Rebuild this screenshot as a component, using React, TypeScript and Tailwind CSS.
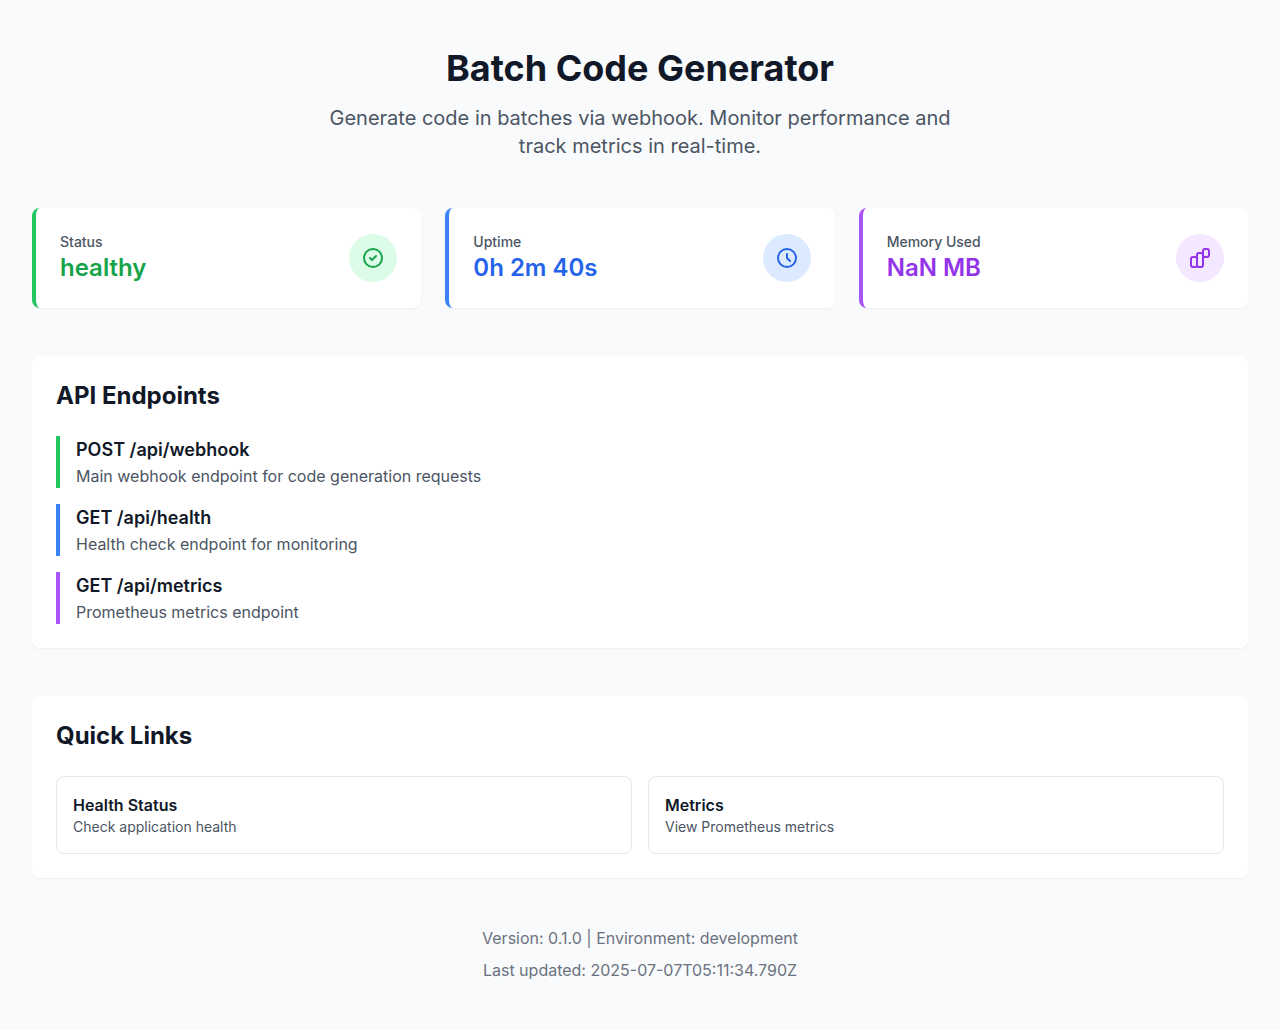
const stats = [
  {
    label: 'Status', value: 'healthy', border: 'border-[#22c55e]', text: 'text-[#16a34a]', bg: 'bg-[#dcfce7]',
    path: 'M9 12l2 2 4-4m6 2a9 9 0 11-18 0 9 9 0 0118 0z',
  },
  {
    label: 'Uptime', value: '0h 2m 40s', border: 'border-[#3b82f6]', text: 'text-[#2563eb]', bg: 'bg-[#dbeafe]',
    path: 'M12 8v4l3 3m6-3a9 9 0 11-18 0 9 9 0 0118 0z',
  },
  {
    label: 'Memory Used', value: 'NaN MB', border: 'border-[#a855f7]', text: 'text-[#9333ea]', bg: 'bg-[#f3e8ff]',
    path: 'M9 19v-6a2 2 0 00-2-2H5a2 2 0 00-2 2v6a2 2 0 002 2h2a2 2 0 002-2zm0 0V9a2 2 0 012-2h2a2 2 0 012 2v10m-6 0a2 2 0 002 2h2a2 2 0 002-2m0 0V5a2 2 0 012-2h2a2 2 0 012 2v4a2 2 0 01-2 2h-2a2 2 0 01-2-2z',
  },
];

const endpoints = [
  { name: 'POST /api/webhook', text: 'Main webhook endpoint for code generation requests', border: 'border-[#22c55e]' },
  { name: 'GET /api/health', text: 'Health check endpoint for monitoring', border: 'border-[#3b82f6]' },
  { name: 'GET /api/metrics', text: 'Prometheus metrics endpoint', border: 'border-[#a855f7]' },
];

const links = [
  { name: 'Health Status', text: 'Check application health', href: '/api/health' },
  { name: 'Metrics', text: 'View Prometheus metrics', href: '/api/metrics' },
];

const card = 'rounded-lg bg-white p-6 shadow-[0_1px_2px_0_rgba(0,0,0,0.05)]';

export default function App() {
  return (
    <div className="min-h-screen bg-[#f9fafb] font-['Inter',sans-serif] text-[#111827]">
      <main className="mx-auto max-w-7xl px-8 py-12">
        <header className="mb-12 text-center">
          <h1 className="mb-4 text-4xl font-bold">Batch Code Generator</h1>
          <p className="mx-auto max-w-2xl text-xl text-[#4b5563]">
            Generate code in batches via webhook. Monitor performance and track metrics in real-time.
          </p>
        </header>

        <section className="mb-12 grid grid-cols-3 gap-6">
          {stats.map((s) => (
            <div key={s.label} className={`flex items-center justify-between border-l-4 ${s.border} ${card}`}>
              <div>
                <p className="text-sm font-medium text-[#4b5563]">{s.label}</p>
                <p className={`text-2xl font-semibold ${s.text}`}>{s.value}</p>
              </div>
              <div className={`flex size-12 items-center justify-center rounded-full ${s.bg} ${s.text}`}>
                <svg className="size-6" fill="none" stroke="currentColor" viewBox="0 0 24 24" aria-hidden="true">
                  <path strokeLinecap="round" strokeLinejoin="round" strokeWidth={2} d={s.path} />
                </svg>
              </div>
            </div>
          ))}
        </section>

        <section className={`mb-12 ${card}`}>
          <h2 className="mb-6 text-2xl font-bold">API Endpoints</h2>
          <div className="space-y-4">
            {endpoints.map((e) => (
              <div key={e.name} className={`border-l-4 pl-4 ${e.border}`}>
                <h3 className="text-lg font-semibold">{e.name}</h3>
                <p className="text-[#4b5563]">{e.text}</p>
              </div>
            ))}
          </div>
        </section>

        <section className={card}>
          <h2 className="mb-6 text-2xl font-bold">Quick Links</h2>
          <div className="grid grid-cols-2 gap-4">
            {links.map((l) => (
              <a key={l.name} href={l.href} className="block rounded-lg border border-[#e5e7eb] p-4 hover:bg-[#f9fafb]">
                <h3 className="font-semibold">{l.name}</h3>
                <p className="text-sm text-[#4b5563]">{l.text}</p>
              </a>
            ))}
          </div>
        </section>

        <footer className="mt-12 text-center text-[#6b7280]">
          <p>Version: 0.1.0 | Environment: development</p>
          <p className="mt-2">Last updated: 2025-07-07T05:11:34.790Z</p>
        </footer>
      </main>
    </div>
  );
}
